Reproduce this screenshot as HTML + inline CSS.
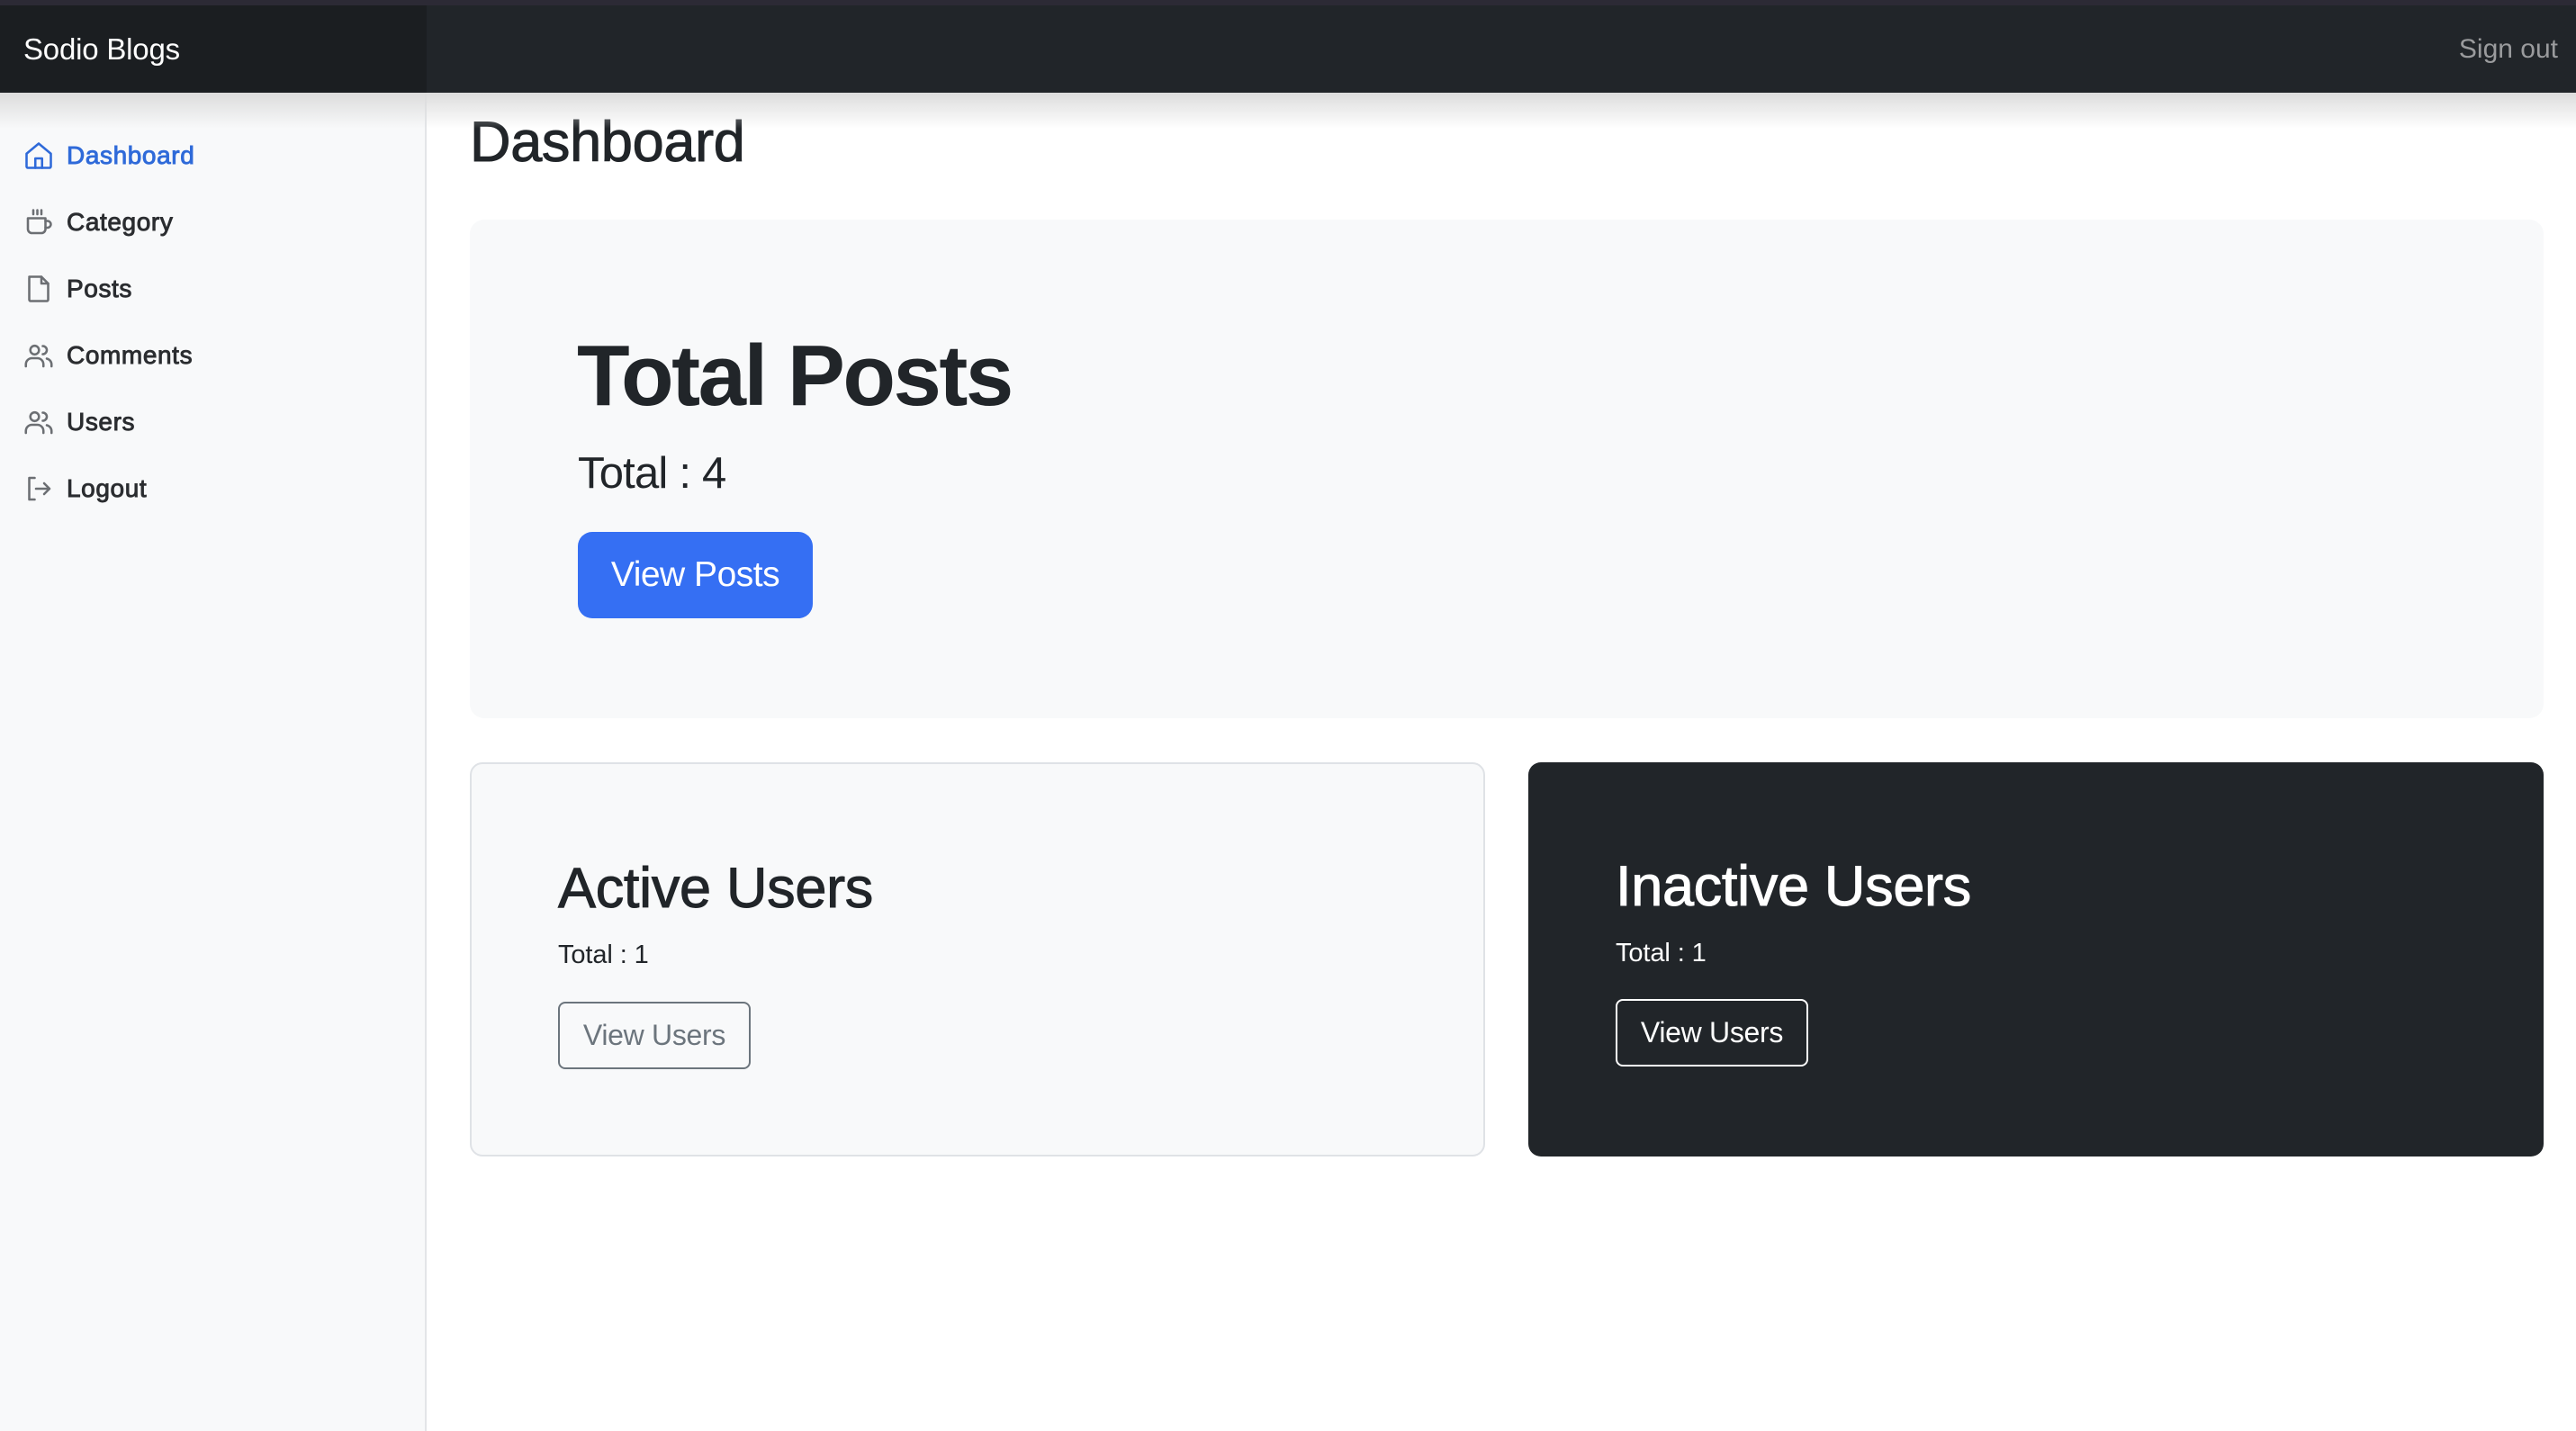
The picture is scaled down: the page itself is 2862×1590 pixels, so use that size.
<!DOCTYPE html>
<html><head><meta charset="utf-8"><style>
*{box-sizing:border-box;margin:0;padding:0}
body{width:2862px;height:1590px;overflow:hidden;background:#fff;font-family:"Liberation Sans",Arial,sans-serif;color:#212529;position:relative}
.topline{position:absolute;left:0;top:0;width:2862px;height:6px;background:#2c2a35}
.nav{position:absolute;left:0;top:6px;width:2862px;height:97px;background:#212529}
.brand{position:absolute;left:0;top:6px;width:474px;height:97px;background:#1b1e21;color:#fff;font-size:33px;line-height:97px;padding-left:26px;letter-spacing:-0.2px}
.signout{position:absolute;right:20px;top:6px;line-height:97px;font-size:30px;color:#9a9b9d}
.shadow{position:absolute;left:0;top:103px;width:2862px;height:40px;background:linear-gradient(#dcdcdc,rgba(255,255,255,0));z-index:2}
.side{position:absolute;left:0;top:103px;width:474px;height:1487px;background:#f8f9fa;border-right:2px solid #e3e5e8}
.item{position:absolute;left:25px;height:40px;display:flex;align-items:center;font-size:28px;font-weight:400;letter-spacing:0.6px;-webkit-text-stroke:0.9px #2b2d30;color:#2b2d30}
.item svg{width:36px;height:36px;margin-right:13px;fill:none;stroke:#6c6f73;stroke-width:1.7;stroke-linecap:round;stroke-linejoin:round}
.item.active{color:#2f6ad9;-webkit-text-stroke:0.9px #2f6ad9}.item.active svg{stroke:#2f6ad9}
h2{position:absolute;left:522px;top:118px;font-size:63px;font-weight:400;-webkit-text-stroke:1px #212529;line-height:80px;letter-spacing:-0.3px}
.jumbo{position:absolute;left:522px;top:244px;width:2304px;height:554px;background:#f8f9fa;border-radius:16px}
.jt{position:absolute;left:119px;top:114px;font-size:96px;font-weight:700;line-height:120px;letter-spacing:-2.5px}
.jc{position:absolute;left:120px;top:252px;font-size:49px;line-height:60px;letter-spacing:-0.8px}
.bp{position:absolute;left:120px;top:347px;width:261px;height:96px;background:#356ff3;border-radius:16px;color:#fff;font-size:39px;line-height:96px;text-align:center;letter-spacing:-0.5px}
.card{position:absolute;top:847px;width:1128px;height:438px;border-radius:14px}
.c1{left:522px;background:#f8f9fa;border:2px solid #dfe2e6}
.c2{left:1698px;background:#212529;color:#fff}
.ct{position:absolute;left:98px;top:98px;font-size:63px;font-weight:400;-webkit-text-stroke:1px currentColor;line-height:80px;letter-spacing:-0.3px}
.cc{position:absolute;left:98px;top:192px;font-size:29px;line-height:40px;letter-spacing:-0.1px}
.bo{position:absolute;left:98px;top:264px;width:214px;height:75px;border:2px solid #6c757d;border-radius:8px;color:#6c757d;font-size:32px;line-height:71px;text-align:center;letter-spacing:-0.3px}
.c2 .ct,.c2 .cc,.c2 .bo{left:97px}
.c2 .bo{border-color:#fff;color:#fff;top:263px}
.c1 .ct,.c1 .cc,.c1 .bo{left:96px}
</style></head><body>
<div class="topline"></div>
<div class="nav"></div>
<div class="brand">Sodio Blogs</div>
<div class="signout">Sign out</div>
<div class="side"></div>
<div class="shadow"></div>

<div class="item active" style="top:153px"><svg viewBox="0 0 24 24"><path d="M3 10.5 12 3l9 7.5V20a1 1 0 0 1-1 1H4a1 1 0 0 1-1-1z"/><path d="M9.5 21v-7h5v7"/></svg>Dashboard</div>
<div class="item" style="top:227px"><svg viewBox="0 0 24 24"><path d="M4 9h13v8a3 3 0 0 1-3 3H7a3 3 0 0 1-3-3z"/><path d="M17 11h1.5a2.5 2.5 0 0 1 0 5H17"/><path d="M8 3v3M11 3v3M14 3v3"/></svg>Category</div>
<div class="item" style="top:301px"><svg viewBox="0 0 24 24"><path d="M5 3h9l5 5v12a1 1 0 0 1-1 1H6a1 1 0 0 1-1-1V4a1 1 0 0 1 1-1z"/><path d="M14 3v5h5"/></svg>Posts</div>
<div class="item" style="top:375px"><svg viewBox="0 0 24 24"><circle cx="9" cy="8" r="3.2"/><path d="M2.5 20v-1.5A4.5 4.5 0 0 1 7 14h4a4.5 4.5 0 0 1 4.5 4.5V20"/><path d="M15 5a3 3 0 0 1 0 6"/><path d="M18 14.3a4.5 4.5 0 0 1 3.5 4.2V20"/></svg>Comments</div>
<div class="item" style="top:449px"><svg viewBox="0 0 24 24"><circle cx="9" cy="8" r="3.2"/><path d="M2.5 20v-1.5A4.5 4.5 0 0 1 7 14h4a4.5 4.5 0 0 1 4.5 4.5V20"/><path d="M15 5a3 3 0 0 1 0 6"/><path d="M18 14.3a4.5 4.5 0 0 1 3.5 4.2V20"/></svg>Users</div>
<div class="item" style="top:523px"><svg viewBox="0 0 24 24"><path d="M9 4H5v16h4"/><path d="M10 12h10M16 8l4 4-4 4"/></svg>Logout</div>

<h2>Dashboard</h2>
<div class="jumbo">
  <div class="jt">Total Posts</div>
  <div class="jc">Total : 4</div>
  <div class="bp">View Posts</div>
</div>
<div class="card c1">
  <div class="ct">Active Users</div>
  <div class="cc">Total : 1</div>
  <div class="bo">View Users</div>
</div>
<div class="card c2">
  <div class="ct">Inactive Users</div>
  <div class="cc">Total : 1</div>
  <div class="bo">View Users</div>
</div>
</body></html>
